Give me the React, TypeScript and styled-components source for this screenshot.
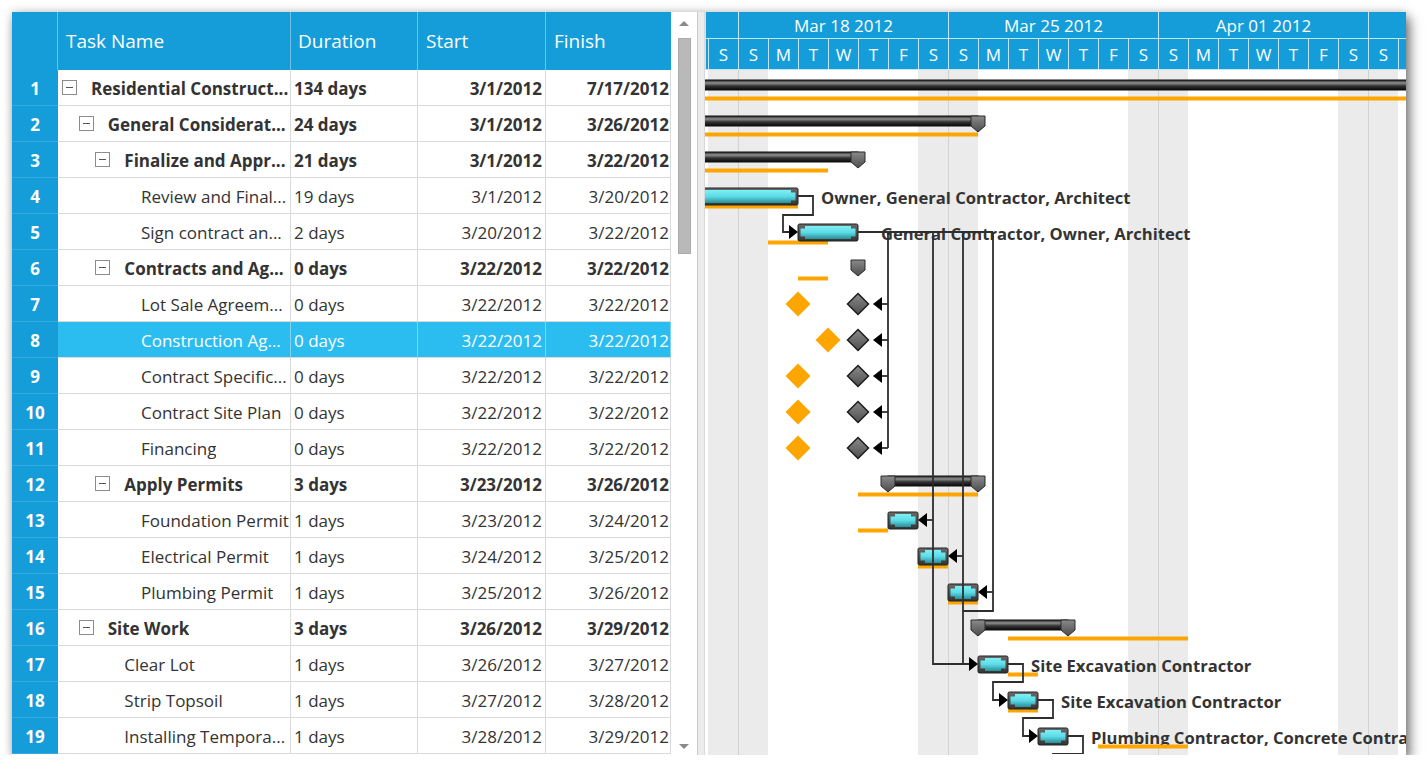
import React from "react";
import styled, { createGlobalStyle } from "styled-components";

const BLUE = "#149dd9";
const SELECT = "#2bbdf0";
const LINE = "#dadada";
const TEXT = "#333333";
const FONT = `"Open Sans", "Noto Sans", "DejaVu Sans", sans-serif`;
const COLS = "46px 233px 127px 128px 125px";

const GlobalStyle = createGlobalStyle`
  html, body { margin: 0; padding: 0; background: #ffffff; }
  body { font-family: ${FONT}; }
  * { box-sizing: border-box; }
`;

const Frame = styled.div`
  margin: 12px 0 0 12px;
  width: 1394px;
  height: 743px;
  display: flex;
  background: #fff;
  overflow: hidden;
  box-shadow: 0 0 9px rgba(0, 0, 0, 0.18), 4px 6px 11px rgba(0, 0, 0, 0.5);
`;

/* ---------- Grid ---------- */
const GridPane = styled.div`
  width: 659px;
  flex-shrink: 0;
  display: flex;
  flex-direction: column;
`;

const GridHeader = styled.div`
  display: grid;
  grid-template-columns: ${COLS};
  height: 58px;
  background: ${BLUE};
  flex-shrink: 0;
`;

const HeaderCell = styled.div<{ $pad: number }>`
  display: flex;
  align-items: center;
  padding-left: ${(p) => p.$pad}px;
  color: #fff;
  font-size: 19px;
  border-right: 1px solid #6ec1e8;
  &:last-child {
    border-right: none;
  }
`;

const GridRow = styled.div`
  display: grid;
  grid-template-columns: ${COLS};
  height: 36px;
  flex-shrink: 0;
`;

const RowNumber = styled.div`
  background: ${BLUE};
  color: #fff;
  font-weight: 700;
  font-size: 17px;
  display: flex;
  align-items: center;
  justify-content: center;
  padding-top: 1px;
  border-bottom: 1px solid #36aadf;
`;

const Cell = styled.div<{ $right?: boolean; $bold?: boolean; $selected?: boolean; $pad?: number }>`
  display: flex;
  align-items: center;
  justify-content: ${(p) => (p.$right ? "flex-end" : "flex-start")};
  padding-top: 1px;
  padding-left: ${(p) => (p.$right ? 0 : 3)}px;
  padding-right: ${(p) => (p.$right ? p.$pad ?? 3 : 0)}px;
  font-size: 17px;
  font-weight: ${(p) => (p.$bold ? 700 : 400)};
  color: ${(p) => (p.$selected ? "#fff" : TEXT)};
  background: ${(p) => (p.$selected ? SELECT : "#fff")};
  border-right: 1px solid ${(p) => (p.$selected ? "#7fd3f3" : LINE)};
  border-bottom: 1px solid ${LINE};
  white-space: nowrap;
  overflow: hidden;
`;

const TaskCell = styled(Cell)<{ $depth: number }>`
  padding-left: ${(p) => 4 + p.$depth * 16.67}px;
`;

const Expander = styled.div`
  width: 15px;
  height: 15px;
  flex-shrink: 0;
  margin-right: 14px;
  margin-top: -1px;
  border: 1px solid #8c8c8c;
  background: #fff;
  display: flex;
  align-items: center;
  justify-content: center;
  &::after {
    content: "";
    width: 7px;
    height: 1px;
    background: #555;
  }
`;

const ExpanderSpacer = styled.div`
  width: 15px;
  flex-shrink: 0;
  margin-right: 14px;
`;

const TaskText = styled.span`
  overflow: hidden;
  white-space: nowrap;
`;

/* ---------- Scrollbar / splitter ---------- */
const ScrollBar = styled.div`
  width: 26px;
  flex-shrink: 0;
  display: flex;
  flex-direction: column;
  align-items: center;
  background: #fff;
`;

const ArrowBox = styled.div<{ $h: number }>`
  height: ${(p) => p.$h}px;
  width: 100%;
  flex-shrink: 0;
  display: flex;
  align-items: center;
  justify-content: center;
`;

const ArrowGlyph = styled.div<{ $down?: boolean }>`
  width: 0;
  height: 0;
  border-left: 5px solid transparent;
  border-right: 5px solid transparent;
  ${(p) => (p.$down ? "border-top: 5px solid #8a8a8a;" : "border-bottom: 5px solid #8a8a8a;")}
`;

const Thumb = styled.div`
  width: 13px;
  height: 216px;
  margin-top: 4px;
  background: #b9b9b9;
  border: 1px solid #ababab;
`;

const Spacer = styled.div`
  flex: 1;
`;

const Splitter = styled.div`
  width: 8px;
  flex-shrink: 0;
  background: #ececec;
  border-left: 1px solid #c9c9c9;
  border-right: 1px solid #d9d9d9;
`;

/* ---------- Gantt ---------- */
const GanttPane = styled.div`
  flex: 1;
  min-width: 0;
  display: flex;
  flex-direction: column;
  overflow: hidden;
`;

const TimelineHeader = styled.div`
  height: 58px;
  flex-shrink: 0;
  background: ${BLUE};
  display: flex;
  flex-direction: column;
`;

const WeekTier = styled.div`
  height: 27px;
  display: flex;
  border-bottom: 1px solid #c3e6f7;
`;

const WeekCell = styled.div<{ $w: number }>`
  flex: 0 0 ${(p) => p.$w}px;
  border-left: 1px solid #c3e6f7;
  color: #fff;
  font-size: 17px;
  display: flex;
  align-items: center;
  justify-content: center;
  white-space: nowrap;
`;

const DayTier = styled.div`
  flex: 1;
  display: flex;
  border-bottom: 1px solid #c3e6f7;
`;

const DayCell = styled.div<{ $w: number }>`
  flex: 0 0 ${(p) => p.$w}px;
  border-left: 1px solid #c3e6f7;
  color: #fff;
  font-size: 17px;
  display: flex;
  align-items: center;
  justify-content: center;
`;

const ChartBody = styled.div`
  flex: 1;
  position: relative;
  overflow: hidden;
`;

const DayColumns = styled.div`
  display: flex;
  height: 100%;
`;

const DayColumn = styled.div<{ $w: number; $weekend?: boolean; $weekStart?: boolean }>`
  flex: 0 0 ${(p) => p.$w}px;
  height: 100%;
  background: ${(p) => (p.$weekend ? "#ebebeb" : "#fff")};
  border-left: ${(p) => (p.$weekStart ? "1px solid #d2d2d2" : "none")};
`;

const ChartOverlay = styled.svg`
  position: absolute;
  top: 0;
  left: 0;
  overflow: hidden;
`;

/* ---------- Data ---------- */
type Row = {
  name: string;
  depth: number;
  summary?: boolean;
  duration: string;
  start: string;
  finish: string;
  selected?: boolean;
};

const ROWS: Row[] = [
  { name: "Residential Construct...", depth: 0, summary: true, duration: "134 days", start: "3/1/2012", finish: "7/17/2012" },
  { name: "General Considerat...", depth: 1, summary: true, duration: "24 days", start: "3/1/2012", finish: "3/26/2012" },
  { name: "Finalize and Appr...", depth: 2, summary: true, duration: "21 days", start: "3/1/2012", finish: "3/22/2012" },
  { name: "Review and Final...", depth: 3, duration: "19 days", start: "3/1/2012", finish: "3/20/2012" },
  { name: "Sign contract an...", depth: 3, duration: "2 days", start: "3/20/2012", finish: "3/22/2012" },
  { name: "Contracts and Ag...", depth: 2, summary: true, duration: "0 days", start: "3/22/2012", finish: "3/22/2012" },
  { name: "Lot Sale Agreem...", depth: 3, duration: "0 days", start: "3/22/2012", finish: "3/22/2012" },
  { name: "Construction Ag...", depth: 3, duration: "0 days", start: "3/22/2012", finish: "3/22/2012", selected: true },
  { name: "Contract Specific...", depth: 3, duration: "0 days", start: "3/22/2012", finish: "3/22/2012" },
  { name: "Contract Site Plan", depth: 3, duration: "0 days", start: "3/22/2012", finish: "3/22/2012" },
  { name: "Financing", depth: 3, duration: "0 days", start: "3/22/2012", finish: "3/22/2012" },
  { name: "Apply Permits", depth: 2, summary: true, duration: "3 days", start: "3/23/2012", finish: "3/26/2012" },
  { name: "Foundation Permit", depth: 3, duration: "1 days", start: "3/23/2012", finish: "3/24/2012" },
  { name: "Electrical Permit", depth: 3, duration: "1 days", start: "3/24/2012", finish: "3/25/2012" },
  { name: "Plumbing Permit", depth: 3, duration: "1 days", start: "3/25/2012", finish: "3/26/2012" },
  { name: "Site Work", depth: 1, summary: true, duration: "3 days", start: "3/26/2012", finish: "3/29/2012" },
  { name: "Clear Lot", depth: 2, duration: "1 days", start: "3/26/2012", finish: "3/27/2012" },
  { name: "Strip Topsoil", depth: 2, duration: "1 days", start: "3/27/2012", finish: "3/28/2012" },
  { name: "Installing Tempora...", depth: 2, duration: "1 days", start: "3/28/2012", finish: "3/29/2012" },
];

const WEEKS = [
  { w: 33, label: "" },
  { w: 210, label: "Mar 18 2012" },
  { w: 210, label: "Mar 25 2012" },
  { w: 210, label: "Apr 01 2012" },
  { w: 60, label: "" },
];

const DAY_LETTERS = ["S", "S", "M", "T", "W", "T", "F"];
// the last column is only a sliver at the pane edge, so it shows no letter
const DAYS = Array.from({ length: 24 }, (_, i) => (i < 23 ? DAY_LETTERS[i % 7] : ""));

/* ---------- Chart drawing ---------- */
const X = (d: number) => 3 + (d - 17) * 30; // d: day of March (Apr 1 = 32)
const CY = (i: number) => 18 + 36 * (i - 1);
const ORANGE = "#ffa500";
const WIRE = "#2e2e2e";

const Cap = ({ cx, top }: { cx: number; top: number }) => (
  <polygon
    points={`${cx - 7},${top} ${cx + 7},${top} ${cx + 7},${top + 10} ${cx},${top + 16} ${cx - 7},${top + 10}`}
    fill="url(#capGrad)"
    stroke="#2a2a2a"
    strokeWidth={1}
  />
);

const SummaryBar = ({ x1, x2, cy, start, end }: { x1: number; x2: number; cy: number; start?: boolean; end?: boolean }) => (
  <g>
    <rect x={x1} y={cy - 8} width={x2 - x1} height={10} fill="url(#blackGrad)" stroke="#111" strokeWidth={1} />
    {start && <Cap cx={x1} top={cy - 8} />}
    {end && <Cap cx={x2} top={cy - 8} />}
  </g>
);

const TaskBar = ({ x1, x2, cy }: { x1: number; x2: number; cy: number }) => {
  const y = cy - 8;
  const h = 17;
  const pts = [
    [x1 + 7, y + 2],
    [x2 - 7, y + 2],
    [x2 - 7, y + 4.5],
    [x2 - 2.5, y + 4.5],
    [x2 - 2.5, y + h - 4.5],
    [x2 - 7, y + h - 4.5],
    [x2 - 7, y + h - 2],
    [x1 + 7, y + h - 2],
    [x1 + 7, y + h - 4.5],
    [x1 + 2.5, y + h - 4.5],
    [x1 + 2.5, y + 4.5],
    [x1 + 7, y + 4.5],
  ]
    .map((p) => p.join(","))
    .join(" ");
  return (
    <g>
      <rect x={x1} y={y} width={x2 - x1} height={h} rx={1.5} fill="url(#frameGrad)" stroke="#222" strokeWidth={1} />
      <polygon points={pts} fill="url(#cyanGrad)" />
    </g>
  );
};

const Baseline = ({ x1, x2, cy }: { x1: number; x2: number; cy: number }) => (
  <rect x={x1} y={cy + 8.5} width={x2 - x1} height={4} fill={ORANGE} />
);

const Diamond = ({ cx, cy, r, orange }: { cx: number; cy: number; r: number; orange?: boolean }) => (
  <polygon
    points={`${cx},${cy - r} ${cx + r},${cy} ${cx},${cy + r} ${cx - r},${cy}`}
    fill={orange ? ORANGE : "url(#diamondGrad)"}
    stroke={orange ? "none" : "#1c1c1c"}
    strokeWidth={1.5}
  />
);

const Arrow = ({ tip, cy, left }: { tip: number; cy: number; left?: boolean }) => {
  const b = left ? tip + 9 : tip - 9;
  return <polygon points={`${tip},${cy} ${b},${cy - 7} ${b},${cy + 7}`} fill="#000" />;
};

const Label = ({ x, cy, children }: { x: number; cy: number; children: React.ReactNode }) => (
  <text
    x={x}
    y={cy + 1}
    dominantBaseline="central"
    fontFamily={FONT}
    fontSize={16.6}
    fontWeight={700}
    fill="#333"
  >
    {children}
  </text>
);

const GanttChart = () => {
  const milestoneRows = [7, 8, 9, 10, 11];
  return (
    <ChartOverlay width={701} height={684} viewBox="0 0 701 684">
      <defs>
        <linearGradient id="blackGrad" x1="0" y1="0" x2="0" y2="1">
          <stop offset="0" stopColor="#222" />
          <stop offset="0.3" stopColor="#8e8e8e" />
          <stop offset="0.6" stopColor="#333" />
          <stop offset="1" stopColor="#080808" />
        </linearGradient>
        <linearGradient id="capGrad" x1="0" y1="0" x2="0" y2="1">
          <stop offset="0" stopColor="#8a8a8a" />
          <stop offset="1" stopColor="#4c4c4c" />
        </linearGradient>
        <linearGradient id="frameGrad" x1="0" y1="0" x2="0" y2="1">
          <stop offset="0" stopColor="#6a6a6a" />
          <stop offset="1" stopColor="#333" />
        </linearGradient>
        <linearGradient id="cyanGrad" x1="0" y1="0" x2="0" y2="1">
          <stop offset="0" stopColor="#7ef0f6" />
          <stop offset="0.5" stopColor="#5cdbe6" />
          <stop offset="1" stopColor="#2b8e98" />
        </linearGradient>
        <linearGradient id="diamondGrad" x1="0" y1="0" x2="0" y2="1">
          <stop offset="0" stopColor="#8a8a8a" />
          <stop offset="1" stopColor="#4e4e4e" />
        </linearGradient>
      </defs>

      {/* labels */}
      <Label x={116} cy={CY(4)}>Owner, General Contractor, Architect</Label>
      <Label x={176} cy={CY(5)}>General Contractor, Owner, Architect</Label>
      <Label x={326} cy={CY(17)}>Site Excavation Contractor</Label>
      <Label x={356} cy={CY(18)}>Site Excavation Contractor</Label>
      <Label x={386} cy={CY(19)}>Plumbing Contractor, Concrete Contractor</Label>

      {/* baselines */}
      <Baseline x1={0} x2={701} cy={CY(1)} />
      <Baseline x1={0} x2={X(26)} cy={CY(2)} />
      <Baseline x1={0} x2={X(21)} cy={CY(3)} />
      <Baseline x1={0} x2={X(20)} cy={CY(4)} />
      <Baseline x1={X(19)} x2={X(21)} cy={CY(5)} />
      <Baseline x1={X(20)} x2={X(21)} cy={CY(6)} />
      <Baseline x1={X(22)} x2={X(26)} cy={CY(12)} />
      <Baseline x1={X(22)} x2={X(23)} cy={CY(13)} />
      <Baseline x1={X(24)} x2={X(25)} cy={CY(14)} />
      <Baseline x1={X(25)} x2={X(26)} cy={CY(15)} />
      <Baseline x1={X(27)} x2={X(33)} cy={CY(16)} />
      <Baseline x1={X(27)} x2={X(28)} cy={CY(17)} />
      <Baseline x1={X(27)} x2={X(28)} cy={CY(18)} />
      <Baseline x1={X(30)} x2={X(33)} cy={CY(19)} />

      {/* orange milestone baselines */}
      <Diamond cx={X(20)} cy={CY(7)} r={12.5} orange />
      <Diamond cx={X(21)} cy={CY(8)} r={12.5} orange />
      <Diamond cx={X(20)} cy={CY(9)} r={12.5} orange />
      <Diamond cx={X(20)} cy={CY(10)} r={12.5} orange />
      <Diamond cx={X(20)} cy={CY(11)} r={12.5} orange />

      {/* summary bars */}
      <SummaryBar x1={-20} x2={730} cy={CY(1)} />
      <SummaryBar x1={-20} x2={X(26)} cy={CY(2)} end />
      <SummaryBar x1={-20} x2={X(22)} cy={CY(3)} end />
      <Cap cx={X(22)} top={CY(6) - 8} />
      <SummaryBar x1={X(23)} x2={X(26)} cy={CY(12)} start end />
      <SummaryBar x1={X(26)} x2={X(29)} cy={CY(16)} start end />

      {/* task bars */}
      <TaskBar x1={-60} x2={X(20)} cy={CY(4)} />
      <TaskBar x1={X(20)} x2={X(22)} cy={CY(5)} />
      <TaskBar x1={X(23)} x2={X(24)} cy={CY(13)} />
      <TaskBar x1={X(24)} x2={X(25)} cy={CY(14)} />
      <TaskBar x1={X(25)} x2={X(26)} cy={CY(15)} />
      <TaskBar x1={X(26)} x2={X(27)} cy={CY(17)} />
      <TaskBar x1={X(27)} x2={X(28)} cy={CY(18)} />
      <TaskBar x1={X(28)} x2={X(29)} cy={CY(19)} />

      {/* milestones */}
      {milestoneRows.map((r) => (
        <Diamond key={r} cx={X(22)} cy={CY(r)} r={10.5} />
      ))}

      {/* connectors */}
      <g fill="none" stroke={WIRE} strokeWidth={1.8}>
        <path d={`M${X(20)},${CY(4)} H108 V145 H78 V${CY(5)} H86`} />
        <path d={`M${X(22)},${CY(5)} H288`} />
        <path d={`M183,${CY(5)} V${CY(11)}`} />
        {milestoneRows.map((r) => (
          <path key={r} d={`M183,${CY(r)} H176`} />
        ))}
        <path d={`M228,${CY(5)} V${CY(17)} H266`} />
        <path d={`M228,${CY(13)} H221`} />
        <path d={`M258,${CY(5)} V${CY(17)}`} />
        <path d={`M258,${CY(14)} H251`} />
        <path d={`M288,${CY(5)} V541 H258`} />
        <path d={`M288,${CY(15)} H281`} />
        <path d={`M${X(27)},${CY(17)} H318 V612 H288 V${CY(18)} H296`} />
        <path d={`M${X(28)},${CY(18)} H348 V648 H318 V${CY(19)} H326`} />
        <path d={`M${X(29)},${CY(19)} H378 V684 H348 V700`} />
      </g>

      {/* arrows */}
      <Arrow tip={X(20)} cy={CY(5)} />
      {milestoneRows.map((r) => (
        <Arrow key={r} tip={168} cy={CY(r)} left />
      ))}
      <Arrow tip={X(24)} cy={CY(13)} left />
      <Arrow tip={X(25)} cy={CY(14)} left />
      <Arrow tip={X(26)} cy={CY(15)} left />
      <Arrow tip={X(26)} cy={CY(17)} />
      <Arrow tip={X(27)} cy={CY(18)} />
      <Arrow tip={X(28)} cy={CY(19)} />
    </ChartOverlay>
  );
};

/* ---------- App ---------- */
export default function App() {
  return (
    <>
      <GlobalStyle />
      <Frame>
        <GridPane>
          <GridHeader>
            <HeaderCell $pad={0} />
            <HeaderCell $pad={8}>Task Name</HeaderCell>
            <HeaderCell $pad={7}>Duration</HeaderCell>
            <HeaderCell $pad={8}>Start</HeaderCell>
            <HeaderCell $pad={8}>Finish</HeaderCell>
          </GridHeader>
          {ROWS.map((r, i) => (
            <GridRow key={i}>
              <RowNumber>{i + 1}</RowNumber>
              <TaskCell $depth={r.depth} $bold={r.summary} $selected={r.selected}>
                {r.summary ? <Expander /> : <ExpanderSpacer />}
                <TaskText>{r.name}</TaskText>
              </TaskCell>
              <Cell $bold={r.summary} $selected={r.selected}>
                {r.duration}
              </Cell>
              <Cell $right $pad={3} $bold={r.summary} $selected={r.selected}>
                {r.start}
              </Cell>
              <Cell $right $pad={1} $bold={r.summary} $selected={r.selected}>
                {r.finish}
              </Cell>
            </GridRow>
          ))}
        </GridPane>

        <ScrollBar>
          <ArrowBox $h={22}>
            <ArrowGlyph />
          </ArrowBox>
          <Thumb />
          <Spacer />
          <ArrowBox $h={18}>
            <ArrowGlyph $down />
          </ArrowBox>
        </ScrollBar>

        <Splitter />

        <GanttPane>
          <TimelineHeader>
            <WeekTier>
              {WEEKS.map((w, i) => (
                <WeekCell key={i} $w={w.w}>
                  {w.label}
                </WeekCell>
              ))}
            </WeekTier>
            <DayTier>
              <DayCell $w={3} />
              {DAYS.map((d, i) => (
                <DayCell key={i} $w={30}>
                  {d}
                </DayCell>
              ))}
            </DayTier>
          </TimelineHeader>
          <ChartBody>
            <DayColumns>
              <DayColumn $w={3} />
              {DAYS.map((_, i) => (
                <DayColumn key={i} $w={30} $weekend={i % 7 < 2} $weekStart={i % 7 === 1} />
              ))}
            </DayColumns>
            <GanttChart />
          </ChartBody>
        </GanttPane>
      </Frame>
    </>
  );
}
